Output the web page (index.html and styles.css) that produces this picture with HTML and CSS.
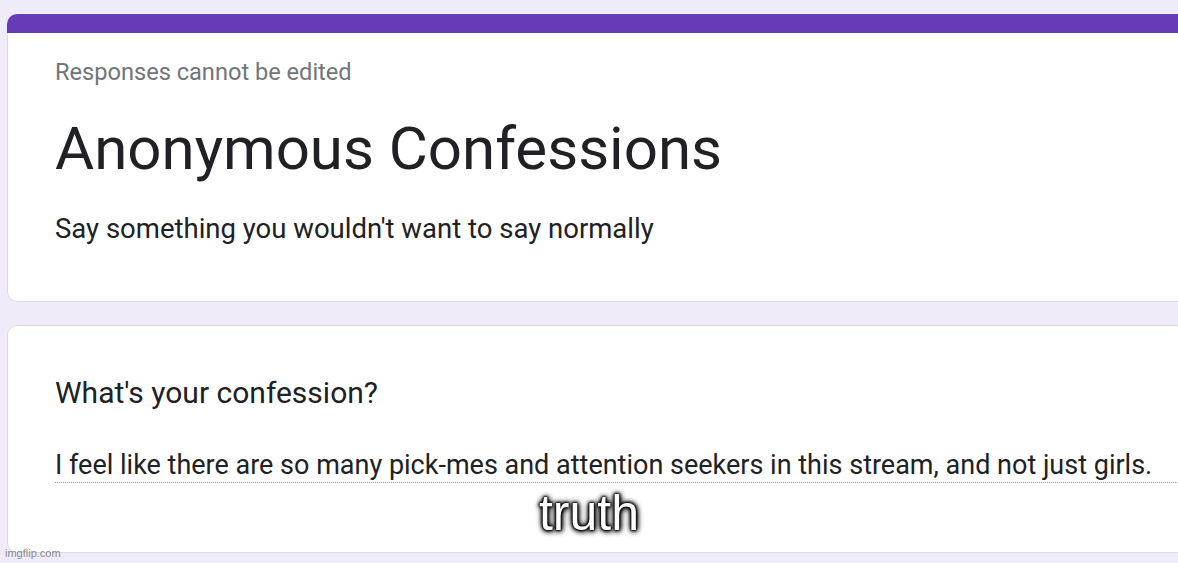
FILE: index.html
```html
<!DOCTYPE html>
<html>

	<head>
		<meta charset="UTF-8">
		<title>Anonymous Confessions</title>
		<link rel="stylesheet" href="styles.css">
	</head>

	<body>
		<main class="form">
			<section class="card card-head">
				<div class="bar"></div>
				<div class="head-body">
					<p class="note">Responses cannot be edited</p>
					<h1 class="title">Anonymous Confessions</h1>
					<p class="desc">Say something you wouldn't want to say normally</p>
				</div>
			</section>
			<section class="card question">
				<h2 class="q-title">What's your confession?</h2>
				<div class="answer">I feel like there are so many pick-mes and attention seekers in this stream, and not just girls.</div>
			</section>
		</main>
		<div class="caption">truth</div>
		<div class="watermark">imgflip.com</div>
	</body>

</html>
```

FILE: styles.css
```css
html,
body {
	height: 100%;
}

body {
	margin: 0;
	background: #f0ebf8;
	font-family: Roboto, "Liberation Sans", Arial, sans-serif;
	color: #202124;
	overflow: hidden;
	position: relative;
}

.form {
	padding: 14px 0 0 7px;
	width: 1220px;
}

p,
h1,
h2 {
	margin: 0;
	font-weight: 400;
}

.card {
	background: #fff;
	border-radius: 10px;
}

.bar {
	height: 19px;
	background: #673ab7;
	border-radius: 10px 10px 0 0;
}

.head-body {
	border: 1px solid #dadce0;
	border-top: none;
	border-radius: 0 0 10px 10px;
	padding: 23px 0 55px 47px;
}

.note {
	font-size: 23.6px;
	line-height: 32px;
	color: #70757a;
}

.title {
	font-size: 60px;
	line-height: 72px;
	margin-top: 25px;
}

.desc {
	font-size: 27.5px;
	line-height: 34px;
	margin-top: 27px;
}

.question {
	margin-top: 23px;
	border: 1px solid #dadce0;
	padding: 49px 0 69px 47px;
}

.q-title {
	font-size: 30px;
	line-height: 36px;
}

.answer {
	margin-top: 37px;
	font-size: 27px;
	line-height: 34px;
	border-bottom: 1px dotted #9aa0a6;
}

.caption {
	position: absolute;
	left: 0;
	right: 0;
	top: 485px;
	text-align: center;
	font: 50px/56px "Liberation Sans", Arial, sans-serif;
	color: #fff;
	text-shadow: 0 0 2px #000, 0 0 2px #000, 0 0 3px #000, 0 0 4px #000, 0 0 6px #000, 1px 1px 6px #000;
}

.watermark {
	position: absolute;
	left: 5px;
	top: 547px;
	font: 11px/13px "Liberation Sans", Arial, sans-serif;
	color: rgba(110, 110, 110, 0.8);
}
```
